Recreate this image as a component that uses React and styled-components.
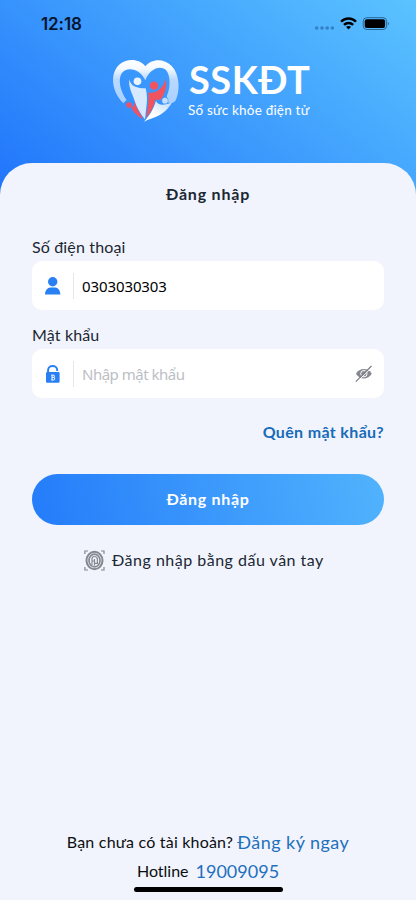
import React, { useState } from "react";
import styled, { createGlobalStyle } from "styled-components";

const GlobalStyle = createGlobalStyle`
  * {
    box-sizing: border-box;
  }
  body {
    margin: 0;
    font-family: Lato, "Noto Sans", sans-serif;
  }
`;

const Screen = styled.div`
  display: flex;
  flex-direction: column;
  height: 900px;
  background: linear-gradient(37deg, #1f73fb 0%, #5bc3ff 100%) top / 100% 204px no-repeat #f1f4fc;
`;

const StatusBar = styled.div`
  display: flex;
  align-items: center;
  justify-content: space-between;
  height: 48px;
  padding: 0 25px 0 41px;
`;

const Time = styled.span`
  font: 600 17px/20px Inter, sans-serif;
  letter-spacing: -0.1px;
  color: #06142e;
`;

const Indicators = styled.div`
  display: flex;
  align-items: center;
  height: 20px;
`;

const Brand = styled.div`
  display: flex;
  height: 115px;
  padding: 4px 0 0 105px;
`;

const BrandText = styled.div`
  display: flex;
  flex-direction: column;
  padding-top: 6px;
  margin-left: -7px;
  color: #fff;
  white-space: nowrap;
`;

const BrandName = styled.span`
  padding-left: 1px;
  font: 700 38px/43px Lato, "Noto Sans", sans-serif;
  letter-spacing: 0.5px;
`;

const Line = styled.span`
  font-size: ${(props) => props.$size || 16}px;
  font-weight: ${(props) => props.$weight || 400};
  line-height: ${(props) => props.$height || 22}px;
  letter-spacing: ${(props) => props.$spacing ?? 0.15}px;
  color: ${(props) => props.$color || "#1b2733"};
  white-space: nowrap;
`;

const Sheet = styled.form`
  display: flex;
  flex-direction: column;
  flex: 1;
  padding: 20px 32px 8px;
  border-radius: 32px 32px 0 0;
  background: #f1f4fc;
`;

const Title = styled.h1`
  display: flex;
  justify-content: center;
  height: 24px;
  margin: 0 0 29px;
`;

const Field = styled.label`
  display: flex;
  flex-direction: column;
  height: 88px;
`;

const InputBox = styled.div`
  display: flex;
  align-items: center;
  height: 49px;
  margin-top: 3px;
  padding: 0 11px;
  border-radius: 10px;
  background: #fff;
`;

const Divider = styled.span`
  width: 1px;
  height: 26px;
  margin: 0 8px 0 10px;
  background: #e4e6eb;
`;

const Input = styled.input`
  flex: 1;
  min-width: 0;
  padding: 0;
  border: 0;
  outline: 0;
  background: none;
  font: 400 15px/22px "Noto Sans", sans-serif;
  letter-spacing: -0.1px;
  color: #000;

  &::placeholder {
    color: #bcbec4;
    letter-spacing: -0.5px;
    opacity: 1;
  }
`;

const IconButton = styled.button`
  display: flex;
  padding: 0;
  border: 0;
  background: none;
`;

const Forgot = styled.a`
  display: flex;
  justify-content: flex-end;
  height: 22px;
  margin-top: 9px;
`;

const Submit = styled.button`
  height: 51px;
  margin-top: 30.5px;
  border: 0;
  border-radius: 26px;
  background: linear-gradient(75deg, #247cfa 0%, #51b3fd 100%);
  font-family: inherit;
`;

const Fingerprint = styled.div`
  display: flex;
  align-items: center;
  gap: 7px;
  height: 24px;
  margin: 23.5px 0 0 52px;
`;

const Footer = styled.footer`
  display: flex;
  flex-direction: column;
  align-items: center;
  margin-top: auto;
`;

const FooterRow = styled.div`
  display: flex;
  align-items: center;
  gap: ${(props) => props.$gap}px;
  height: 29px;
`;

const HomeBar = styled.div`
  width: 149px;
  height: 5px;
  margin-top: 2px;
  border-radius: 3px;
  background: #000;
`;

const StatusIcons = () => (
  <svg width="78" height="20" viewBox="0 0 78 20">
    <g fill="#2b6fb5" opacity=".75">
      <circle cx="3.7" cy="14" r="1.8" />
      <circle cx="9" cy="14" r="1.8" />
      <circle cx="14.2" cy="14" r="1.8" />
      <circle cx="19.4" cy="14" r="1.8" />
    </g>
    <g fill="none" stroke="#000" strokeWidth="2.4">
      <path d="M28.1 7.7C32 3.4 39 3.4 43 7.7" />
      <path d="M31 10.9C33.5 8.4 37.6 8.4 40.2 10.9" />
    </g>
    <path d="M33 12.8Q35.5 11 38.1 12.8L35.5 15.5Z" />
    <rect x="50.2" y="3.7" width="23.4" height="11.8" rx="3.6" fill="none" stroke="#286494" strokeWidth="1" />
    <rect x="51.7" y="5.2" width="20.4" height="8.8" rx="2" />
    <path d="M74.9 7.8Q76.8 9.6 74.9 11.4Z" fill="#286494" />
  </svg>
);

// Heart with four small figures inside
const HeartLogo = () => (
  <svg width="90" height="76" viewBox="0 0 270 228">
    <defs>
      <linearGradient id="heart" x1="0" y1="0" x2="0" y2="1">
        <stop offset="0" stopColor="#fff" />
        <stop offset=".2" stopColor="#f4f9ff" />
        <stop offset=".45" stopColor="#b9d9ff" />
        <stop offset="1" stopColor="#a9d0ff" />
      </linearGradient>
      <linearGradient id="page" x1="0" y1="1" x2="1" y2="0">
        <stop offset=".35" stopColor="#fff" />
        <stop offset="1" stopColor="#b7d8fb" />
      </linearGradient>
    </defs>
    <path
      d="M121 43C104 20 68 18 45 36C13 62 19 121 56 154Q59 147 65 145C46 118 38 84 50 64C66 42 105 50 121 85C133 52 164 38 183 54C198 72 196 111 185 133Q189 139 188 151Q202 157 211 147C226 119 225 68 200 42C177 18 139 19 121 43Z"
      fill="url(#heart)"
    />
    <circle cx="97.5" cy="88" r="11.5" fill="#e9f4ff" />
    <path d="M72 82C77 102 96 110 122 109C127 127 127 148 124 166L120 202C109 189 96 168 90 150C83 126 71 111 72 82Z" fill="#d7e9ff" />
    <path d="M183 80C186 108 179 127 167 143L151 143C147 163 137 180 124 198C126 173 133 150 130 121C151 127 176 107 183 80Z" fill="#f2545f" />
    <circle cx="147" cy="101" r="15" fill="#4197fb" />
    <circle cx="147" cy="101" r="12.5" fill="#f2545f" />
    <circle cx="72" cy="159" r="8.5" fill="#ed5367" />
    <path d="M78 166C84 166 89 159 88 147C92 164 103 181 115 202C102 195 87 185 78 166Z" fill="#ee5266" />
    <path d="M117 209C133 190 145 174 153 146C158 161 178 162 202 150C187 174 172 190 138 200Q127 203 117 209Z" fill="url(#page)" />
    <circle cx="180" cy="146" r="10" fill="#4699fb" />
    <circle cx="180" cy="146" r="8.5" fill="#c5e0ff" />
  </svg>
);

const UserIcon = () => (
  <svg width="20" height="20" viewBox="0 0 20 20" fill="#2980f3">
    <circle cx="9.7" cy="5.8" r="4.7" />
    <path d="M2 18.5C2 14.4 4.6 11.5 7.2 11.5H12.2C15 11.5 17.3 14.4 17.3 18.5Z" />
  </svg>
);

const LockIcon = () => (
  <svg width="20" height="20" viewBox="0 0 20 20">
    <path d="M5.1 8V6.2C5.1 .6 14.2 .6 14.2 6.2V7" fill="none" stroke="#2980f3" strokeWidth="2" />
    <rect x="3" y="8.1" width="13.6" height="10.7" rx="1.2" fill="#2980f3" />
    <path d="M8.2 11.1H10.2Q11.5 11.1 11.5 12.3Q11.5 13.4 10.4 13.4Q11.8 13.5 11.8 14.8Q11.8 16 10.4 16H8.2M9 11.1V16M9 13.4H10.5" fill="none" stroke="#fff" strokeWidth="1" />
  </svg>
);

const EyeIcon = () => (
  <svg width="18" height="18" viewBox="0 0 18 18">
    <path d="M1 8.7C4.4 2.5 13.2 2.5 16.8 8.7C13.2 15 4.4 15 1 8.7Z" fill="#86878f" />
    <circle cx="8.9" cy="8.7" r="3.2" fill="none" stroke="#fff" strokeWidth="1" />
    <path d="M2 17.1L17.2 2" stroke="#fff" strokeWidth="1" />
    <path d="M.8 16.6L16.5 1" stroke="#7d7e87" strokeWidth="1.2" />
  </svg>
);

const FingerprintIcon = () => (
  <svg width="21" height="21" viewBox="0 0 21 21" fill="none" stroke="#85868f">
    <path d="M.9 4V1H4M17 1H20V4M20 17V20H17M4 20H.9V17" strokeWidth="1.2" />
    <ellipse cx="10.5" cy="10.5" rx="8" ry="8.7" strokeWidth="2" />
    <ellipse cx="10.5" cy="10.5" rx="5.5" ry="6.3" strokeWidth="1.7" />
    <path d="M8 15V9Q8 6.5 10.5 6.5Q13.4 6.5 13.4 9.5V14M10.5 15.5V9M8 11H10.5V13.3H13" strokeWidth="1.2" />
  </svg>
);

const App = () => {
  const [phone, setPhone] = useState("0303030303");
  const [password, setPassword] = useState("");
  const [visible, setVisible] = useState(false);

  return (
    <Screen>
      <GlobalStyle />
      <StatusBar>
        <Time>12:18</Time>
        <Indicators>
          <StatusIcons />
        </Indicators>
      </StatusBar>
      <Brand>
        <HeartLogo />
        <BrandText>
          <BrandName>SSKĐT</BrandName>
          <Line $size={13.5} $height={18} $spacing={0.2} $color="#fff">
            Sổ sức khỏe điện tử
          </Line>
        </BrandText>
      </Brand>
      <Sheet onSubmit={(e) => e.preventDefault()}>
        <Title>
          <Line $weight={700} $spacing={0.8}>
            Đăng nhập
          </Line>
        </Title>
        <Field>
          <Line>Số điện thoại</Line>
          <InputBox>
            <UserIcon />
            <Divider />
            <Input value={phone} onChange={(e) => setPhone(e.target.value)} />
          </InputBox>
        </Field>
        <Field>
          <Line>Mật khẩu</Line>
          <InputBox>
            <LockIcon />
            <Divider />
            <Input
              type={visible ? "text" : "password"}
              placeholder="Nhập mật khẩu"
              value={password}
              onChange={(e) => setPassword(e.target.value)}
            />
            <IconButton type="button" onClick={() => setVisible(!visible)}>
              <EyeIcon />
            </IconButton>
          </InputBox>
        </Field>
        <Forgot>
          <Line $weight={700} $spacing={0.35} $color="#176bb9">
            Quên mật khẩu?
          </Line>
        </Forgot>
        <Submit>
          <Line $weight={700} $spacing={0.7} $color="#fff">
            Đăng nhập
          </Line>
        </Submit>
        <Fingerprint>
          <FingerprintIcon />
          <Line $spacing={0.5}>Đăng nhập bằng dấu vân tay</Line>
        </Fingerprint>
        <Footer>
          <FooterRow $gap={4}>
            <Line $color="#0b0d10" $spacing={0.2}>
              Bạn chưa có tài khoản?
            </Line>
            <Line $size={18} $spacing={0.45} $color="#1f70bd">
              Đăng ký ngay
            </Line>
          </FooterRow>
          <FooterRow $gap={7}>
            <Line $color="#0b0d10" $spacing={0}>
              Hotline
            </Line>
            <Line $size={18} $spacing={0} $color="#1f70bd">
              19009095
            </Line>
          </FooterRow>
          <HomeBar />
        </Footer>
      </Sheet>
    </Screen>
  );
};

export default App;
